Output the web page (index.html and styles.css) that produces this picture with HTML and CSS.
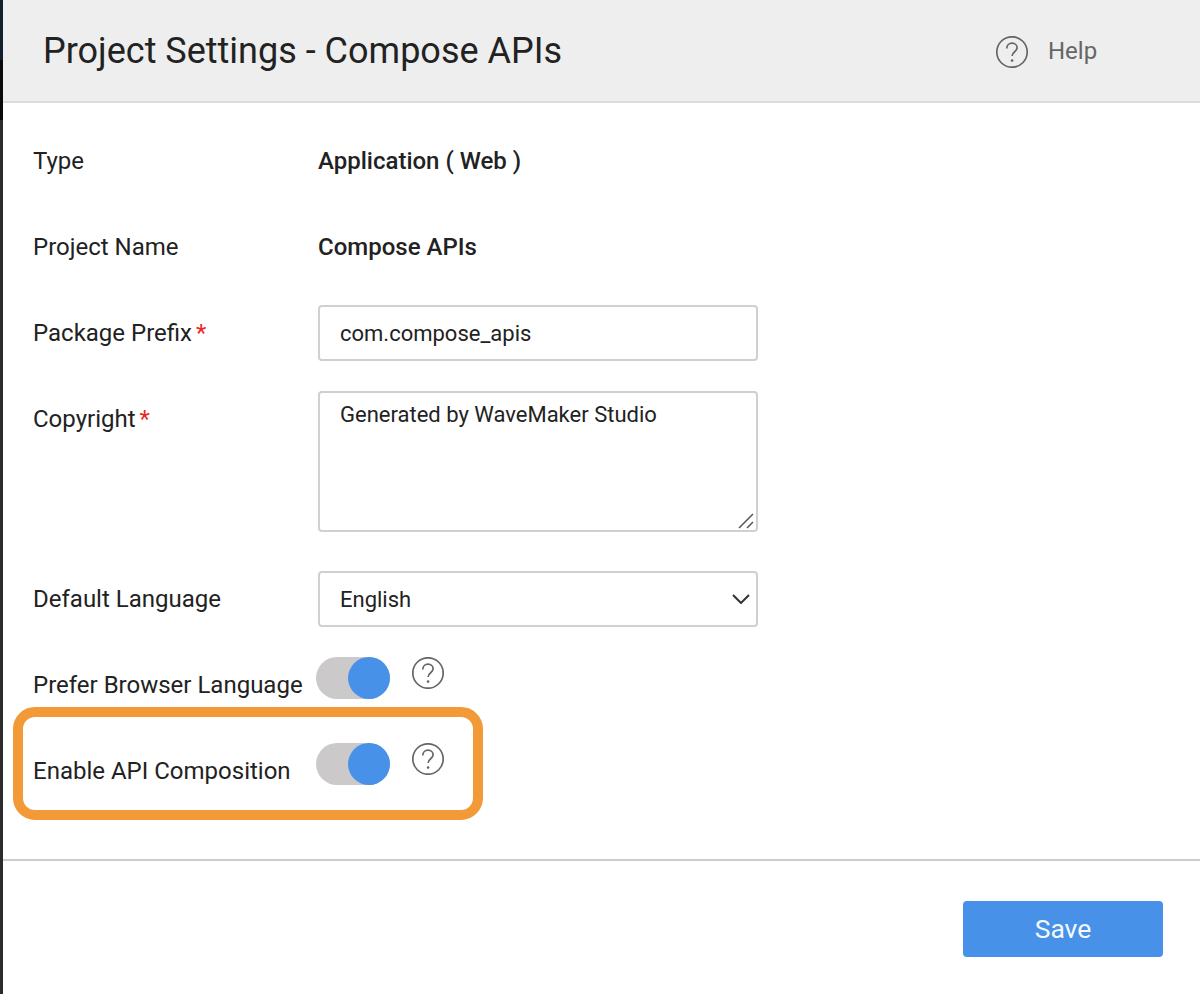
FILE: index.html
```html
<!DOCTYPE html>
<html lang="en">
<head>
  <meta charset="UTF-8" />
  <title>Project Settings - Compose APIs</title>
  <link rel="stylesheet" href="styles.css">
</head>
<body>
  <div class="edge"></div>
  <div class="dialog">
    <header class="header">
      <h1>Project Settings - Compose APIs</h1>
      <a class="help">
        <svg class="help-icon" viewBox="0 0 32 32"><circle cx="16" cy="16" r="15.2"/><path d="M10.8 12.4c0-3 2.3-5.2 5.3-5.2s5 2 5 4.6c0 3.9-5 4-5 8.2"/><circle class="dot" cx="16.1" cy="24.6" r="1.3"/></svg>
        <span>Help</span>
      </a>
    </header>

    <div class="form">
      <div class="row">
        <label>Type</label>
        <strong>Application ( Web )</strong>
      </div>
      <div class="row">
        <label>Project Name</label>
        <strong>Compose APIs</strong>
      </div>
      <div class="row">
        <label>Package Prefix<span class="req">*</span></label>
        <div class="field">com.compose_apis</div>
      </div>
      <div class="row row-top">
        <label>Copyright<span class="req">*</span></label>
        <div class="field area">
          Generated by WaveMaker Studio
          <svg class="grip" viewBox="0 0 16 16"><path d="M1 15L15 1M9 15l6-6"/></svg>
        </div>
      </div>
      <div class="row">
        <label>Default Language</label>
        <div class="field select">
          English
          <svg class="chevron" viewBox="0 0 18 10"><path d="M1 1l8 8 8-8"/></svg>
        </div>
      </div>
      <div class="row row-toggle">
        <label>Prefer Browser Language</label>
        <div class="toggle"><i></i></div>
        <svg class="tip" viewBox="0 0 32 32"><circle cx="16" cy="16" r="15.2"/><path d="M10.8 12.4c0-3 2.3-5.2 5.3-5.2s5 2 5 4.6c0 3.9-5 4-5 8.2"/><circle class="dot" cx="16.1" cy="24.6" r="1.3"/></svg>
      </div>
      <div class="row row-toggle last">
        <label>Enable API Composition</label>
        <div class="toggle"><i></i></div>
        <svg class="tip" viewBox="0 0 32 32"><circle cx="16" cy="16" r="15.2"/><path d="M10.8 12.4c0-3 2.3-5.2 5.3-5.2s5 2 5 4.6c0 3.9-5 4-5 8.2"/><circle class="dot" cx="16.1" cy="24.6" r="1.3"/></svg>
        <div class="callout"></div>
      </div>
    </div>

    <footer class="footer">
      <button>Save</button>
    </footer>
  </div>
</body>
</html>
```

FILE: styles.css
```css
html, body {
  height: 100%;
}
body {
  margin: 0;
  display: flex;
  overflow: hidden;
  background-color: #fff;
  color: #222;
  font-family: Roboto, "Liberation Sans", sans-serif;
  font-size: 24px;
}
.edge {
  width: 3px;
  flex: none;
  background: linear-gradient(#10202e 0, #10202e 60px, #0a0a0a 60px, #0a0a0a 120px, #2b2b2b 120px);
}
.dialog {
  flex: 1;
  min-width: 0;
}
.header {
  height: 101px;
  display: flex;
  align-items: center;
  padding-left: 40px;
  background-color: #eee;
  border-bottom: 2px solid #ddd;
}
h1 {
  flex: 1;
  margin: 0;
  font-size: 36px;
  font-weight: 400;
}
.help {
  width: 204px;
  display: flex;
  align-items: center;
  gap: 20px;
  color: #666;
}
.help-icon {
  width: 32px;
  height: 32px;
  margin-top: 3px;
}
svg circle, svg path {
  fill: none;
  stroke: #666;
  stroke-width: 1.7;
}
svg circle.dot {
  fill: #666;
  stroke: none;
}
.form {
  padding: 29px 0 0 30px;
}
.row {
  position: relative;
  display: flex;
  align-items: center;
  height: 58px;
  margin-bottom: 28px;
}
.row-top {
  align-items: flex-start;
  height: 142px;
  margin-bottom: 38px;
}
.row.last {
  margin-bottom: 59px;
}
label {
  width: 285px;
  flex: none;
}
.row-top label {
  margin-top: 15px;
}
.req {
  color: #e8281e;
  margin-left: 4px;
}
strong {
  font-weight: 500;
}
.field {
  position: relative;
  box-sizing: border-box;
  width: 440px;
  height: 56px;
  padding: 0 20px;
  display: flex;
  align-items: center;
  font-size: 22px;
  border: 2px solid #d0d0d0;
  border-radius: 4px;
}
.area {
  height: 141px;
  margin-top: 1px;
  align-items: flex-start;
  padding-top: 9px;
}
.grip {
  position: absolute;
  right: 2px;
  bottom: 1px;
  width: 16px;
  height: 16px;
}
.grip path {
  stroke: #555;
  stroke-width: 1.5;
}
.chevron {
  position: absolute;
  right: 6px;
  top: 21px;
  width: 18px;
  height: 10px;
}
.chevron path {
  stroke: #333;
  stroke-width: 2;
}
.toggle {
  position: relative;
  width: 74px;
  height: 42px;
  margin-left: -2px;
  align-self: flex-start;
  margin-top: 1px;
  flex: none;
  background-color: #cbc9c9;
  border-radius: 21px;
}
.toggle i {
  position: absolute;
  right: 0;
  top: 0;
  width: 42px;
  height: 42px;
  background-color: #4791e8;
  border-radius: 50%;
}
.tip {
  width: 32px;
  height: 32px;
  margin-left: 22px;
  align-self: flex-start;
  margin-top: 1px;
}
.callout {
  position: absolute;
  left: -20px;
  top: -35px;
  box-sizing: border-box;
  width: 470px;
  height: 113px;
  border: 10px solid #f29a38;
  border-radius: 22px;
}
.footer {
  display: flex;
  justify-content: flex-end;
  padding: 40px 37px 0 0;
  border-top: 2px solid #ccc;
}
button {
  width: 200px;
  height: 56px;
  padding: 0 0 2px;
  border: none;
  border-radius: 4px;
  background-color: #4791e8;
  color: #f4f8fd;
  font-family: inherit;
  font-size: 26.5px;
}
```
